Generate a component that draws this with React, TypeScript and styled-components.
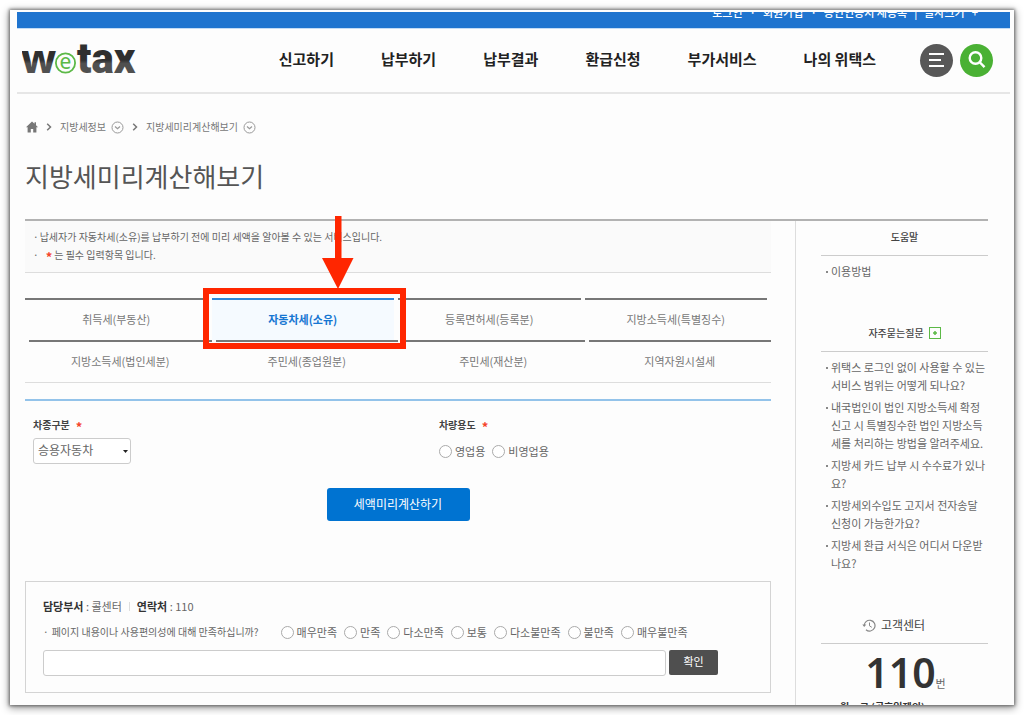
import React from "react";
import styled, { createGlobalStyle } from "styled-components";

const GlobalStyle = createGlobalStyle`
  *, *::before, *::after { box-sizing: border-box; }
  body {
    margin: 0;
    background: #fff;
    color: #666;
    font-family: "Noto Sans CJK KR", "Noto Sans", sans-serif;
    font-size: 11px;
    line-height: 18px;
  }
  ul, ol, p, h1, h2, fieldset { margin: 0; padding: 0; border: 0; list-style: none; }
  a { color: inherit; text-decoration: none; }
  button, input, select { font-family: inherit; }
`;

const Page = styled.div`
  padding: 10px;
`;

const Frame = styled.div`
  height: calc(100vh - 20px);
  overflow: hidden;
  padding: 2px 4px 0 7px;
  background: #fdfdfd;
  box-shadow: 0 0 3px 1px rgba(0, 0, 0, 0.45), 0 2px 8px 1px rgba(0, 0, 0, 0.4);
`;

const UtilityBar = styled.div`
  display: flex;
  justify-content: flex-end;
  gap: 7px;
  height: 16px;
  padding-right: 32px;
  overflow: hidden;
  background: #1f74cf;
  color: #fff;
  font-size: 11px;
  font-weight: 500;
  line-height: 1px;
`;

const Header = styled.header`
  display: flex;
  align-items: center;
  height: 66px;
  padding: 0 17px 1px 5px;
  border-top: 1px solid #c3dcf5;
  border-bottom: 2px solid #e6e6e6;
`;

const LogoLink = styled.a`
  display: block;
  height: 36px;
`;

const MainNav = styled.nav`
  display: flex;
  gap: 47px;
  margin-left: auto;
  padding-bottom: 2px;
  color: #222;
  font-size: 15px;
  font-weight: 700;
`;

const HeaderActions = styled.div`
  display: flex;
  gap: 7px;
  margin-left: 44px;
`;

const RoundButton = styled.button<{ $color: string }>`
  display: flex;
  align-items: center;
  justify-content: center;
  width: 33px;
  height: 33px;
  padding: 0;
  border: 0;
  border-radius: 50%;
  background: ${(p) => p.$color};
`;

const Content = styled.div`
  padding: 23px 22px 0 8px;
`;

const Breadcrumb = styled.nav`
  display: flex;
  align-items: center;
  gap: 8px;
  height: 20px;
  padding-left: 1px;
  color: #777;
  font-size: 10px;
`;

const Crumb = styled.span`
  display: flex;
  align-items: center;
  gap: 5px;
`;

const PageTitle = styled.h1`
  margin: 19px 0 23px;
  color: #555;
  font-size: 26px;
  font-weight: 400;
  line-height: 40px;
`;

const Columns = styled.div`
  display: grid;
  grid-template-columns: minmax(0, 1fr) 193px;
  gap: 24px;
  border-top: 2px solid #b2b2b2;
`;

const Notice = styled.ul`
  padding: 7px 8px 8px;
  border-bottom: 1px solid #ddd;
  background: #fafafa;
  font-size: 10px;
`;

const NoticeItem = styled.li`
  display: flex;
  gap: 1px;
`;

const Required = styled.span`
  margin: 0 2px 0 6px;
  color: #f5442c;
  font-size: 13px;
  font-weight: 700;
  line-height: 10px;
  vertical-align: -3px;
`;

const Tabs = styled.nav`
  margin-top: 25px;
  border-bottom: 1px solid #ddd;
`;

const TabRow = styled.div<{ $shifted?: boolean }>`
  display: grid;
  grid-template-columns: repeat(4, 1fr);
  gap: 4px;
  padding: ${(p) => (p.$shifted ? "0 0 0 4px" : "0 4px 0 0")};
`;

const Tab = styled.a<{ $active?: boolean }>`
  position: relative;
  display: flex;
  align-items: center;
  justify-content: center;
  height: 42px;
  padding-bottom: 2px;
  border-top: 2px solid ${(p) => (p.$active ? "#2f88d8" : "#777")};
  background: ${(p) => (p.$active ? "#f5faff" : "transparent")};
  color: ${(p) => (p.$active ? "#1676d2" : "#777")};
  font-weight: ${(p) => (p.$active ? 700 : 400)};
`;

const Highlight = styled.span`
  position: absolute;
  z-index: 1;
  inset: -12px -12px -9px -9px;
  border: 6px solid #ff2600;
  pointer-events: none;
`;

const HighlightArrow = styled.svg`
  position: absolute;
  left: 113px;
  bottom: 54px;
`;

const TaxForm = styled.form`
  margin-top: 16px;
  padding-top: 15px;
  border-top: 2px solid #93c3ea;
`;

const FieldGrid = styled.div`
  display: grid;
  grid-template-columns: 11fr 9fr;
  padding-left: 8px;
`;

const FieldTitle = styled.div`
  height: 18px;
  margin-bottom: 4px;
  color: #444;
  font-size: 10px;
  font-weight: 700;
`;

const SelectBox = styled.div`
  position: relative;
  width: 98px;
`;

const Select = styled.select`
  display: block;
  width: 100%;
  height: 26px;
  padding: 0 4px 3px;
  appearance: none;
  border: 1px solid #ccc;
  border-radius: 3px;
  background: #fff;
  color: #666;
  font-size: 12px;
`;

const SelectArrow = styled.svg`
  position: absolute;
  right: 3px;
  top: 12px;
  pointer-events: none;
`;

const RadioGroup = styled.div`
  display: flex;
  align-items: center;
  gap: 7px;
  height: 26px;
`;

const RadioLabel = styled.label`
  display: flex;
  align-items: center;
  gap: 3px;
`;

const Radio = styled.input`
  width: 13px;
  height: 13px;
  margin: 0;
  appearance: none;
  border: 1px solid #aaa;
  border-radius: 50%;
  background: #fff;

  &:checked { background: #1676d2; }
`;

const RadioText = styled.span`
  padding-bottom: 1px;
`;

const SubmitButton = styled.button`
  display: block;
  width: 143px;
  height: 33px;
  margin: 24px auto 0;
  padding: 0 0 3px;
  border: 0;
  border-radius: 3px;
  background: #0073d1;
  color: #fff;
  font-size: 12px;
`;

const Feedback = styled.form`
  margin-top: 60px;
  padding: 15px 17px 16px;
  border: 1px solid #d4d4d4;
`;

const Contact = styled.p`
  display: flex;
  align-items: center;
  gap: 7px;

  b { color: #333; }
`;

const Divider = styled.span`
  width: 1px;
  height: 9px;
  background: #ddd;
`;

const Survey = styled.div`
  display: flex;
  align-items: center;
  gap: 22px;
  height: 26px;
  margin-top: 4px;
`;

const Question = styled.span`
  display: flex;
  gap: 3px;
  font-size: 10px;
`;

const Opinion = styled.div`
  display: flex;
  gap: 3px;
  margin-top: 5px;
  padding-right: 35px;
`;

const OpinionInput = styled.input`
  flex: 1;
  min-width: 0;
  height: 26px;
  border: 1px solid #ccc;
  border-radius: 3px;
  background: #fff;
`;

const ConfirmButton = styled.button`
  width: 49px;
  height: 25px;
  padding: 0 0 3px;
  border: 0;
  border-radius: 2px;
  background: #4f4f4f;
  color: #fff;
  font-size: 11px;
`;

const Sidebar = styled.aside`
  padding-left: 25px;
  border-left: 1px solid #ddd;
`;

const SideTitle = styled.h2<{ $large?: boolean }>`
  display: flex;
  align-items: center;
  justify-content: center;
  gap: 5px;
  height: 35px;
  padding: ${(p) => (p.$large ? "0 22px 2px 0" : "0 0 2px")};
  border-bottom: 1px solid #ccc;
  color: #444;
  font-size: ${(p) => (p.$large ? 12 : 10)}px;
  font-weight: ${(p) => (p.$large ? 400 : 500)};
`;

const SideList = styled.ul`
  display: grid;
  gap: 4px;
  padding: 6px 0 0 10px;
`;

const SideItem = styled.li`
  position: relative;

  &::before {
    content: "";
    position: absolute;
    left: -5px;
    top: 9px;
    width: 2px;
    height: 2px;
    background: #888;
  }
`;

const SideSection = styled.section<{ $height?: number }>`
  min-height: ${(p) => p.$height ?? 0}px;
`;

const PhoneNumber = styled.p`
  display: flex;
  align-items: baseline;
  justify-content: center;
  height: 56px;
  padding-left: 2px;
  line-height: 56px;

  strong {
    color: #333;
    font-family: "Noto Sans", sans-serif;
    font-size: 41px;
    font-weight: 600;
  }
`;

const Hours = styled.p`
  padding-left: 19px;
  color: #333;
  font-size: 10px;
  font-weight: 700;
  line-height: 14px;
`;

const Logo = () => (
  <svg width="116" height="36" viewBox="0 0 116 36" role="img" aria-label="wetax">
    <defs>
      <linearGradient id="ink" gradientUnits="userSpaceOnUse" x1="0" y1="0" x2="0" y2="36">
        <stop offset="0.5" stopColor="#2f2f2f" />
        <stop offset="0.6" stopColor="#505050" />
      </linearGradient>
    </defs>
    <g fill="url(#ink)">
      <text x="-1" y="31" fontFamily="'Noto Sans', sans-serif" fontWeight="800" fontSize="40">w</text>
      <text x="55" y="31" fontFamily="Roboto, sans-serif" fontWeight="900" fontSize="42">tax</text>
    </g>
    <circle cx="43.5" cy="21" r="9.6" fill="#fdfdfd" stroke="#5cb947" strokeWidth="1.8" />
    <text x="43.5" y="26.5" textAnchor="middle" fontFamily="'Noto Sans', sans-serif" fontSize="21" fill="#5cb947">e</text>
  </svg>
);

const MenuIcon = () => (
  <svg width="16" height="16" viewBox="0 0 16 16" stroke="#fff" strokeWidth="2">
    <path d="M0 2h15M0 8h12M0 14h15" />
  </svg>
);

const SearchIcon = () => (
  <svg width="18" height="18" viewBox="0 0 18 18" fill="none" stroke="#fff" strokeWidth="2.4">
    <circle cx="7.5" cy="7" r="5.8" />
    <path d="M11.5 11l5 5.2" />
  </svg>
);

const HomeIcon = () => (
  <svg width="12" height="12" viewBox="0 0 12 12" fill="#777">
    <path d="M6 0.5L0 6.2h1.6V11.5h3.2V8h2.4v3.5h3.2V6.2H12L10 4.3V1.3H8.5v1.5z" />
  </svg>
);

const ChevronIcon = () => (
  <svg width="6" height="8" viewBox="0 0 6 8" fill="none" stroke="#777" strokeWidth="1.5">
    <path d="M1.2 0.8L4.5 4 1.2 7.2" />
  </svg>
);

const DownCircleIcon = () => (
  <svg width="13" height="13" viewBox="0 0 13 13" fill="none" stroke="#999">
    <circle cx="6.5" cy="6.5" r="5.5" />
    <path d="M4 5.5l2.5 2.3L9 5.5" strokeWidth="1.2" />
  </svg>
);

const PlusBoxIcon = () => (
  <svg width="12" height="12" viewBox="0 0 12 12" fill="none" stroke="#5cb947">
    <rect x="0.5" y="0.5" width="11" height="11" />
    <path d="M6 4v4M4 6h4" strokeWidth="1.5" />
  </svg>
);

const HistoryIcon = () => (
  <svg width="14" height="13" viewBox="0 0 14 13" fill="none" stroke="#888">
    <path d="M2.2 7A5.4 5.4 0 1 1 4 10.7" strokeWidth="1.2" />
    <path d="M0.3 5.5L2.2 8 4.3 5.5z" fill="#888" stroke="none" />
    <path d="M7.5 3.5v3.3l2.3 1.5" />
  </svg>
);

const menu = ["신고하기", "납부하기", "납부결과", "환급신청", "부가서비스", "나의 위택스"];
const firstTabs = ["취득세(부동산)", "자동차세(소유)", "등록면허세(등록분)", "지방소득세(특별징수)"];
const secondTabs = ["지방소득세(법인세분)", "주민세(종업원분)", "주민세(재산분)", "지역자원시설세"];
const ratings = ["매우만족", "만족", "다소만족", "보통", "다소불만족", "불만족", "매우불만족"];
const questions = [
  "위택스 로그인 없이 사용할 수 있는 서비스 범위는 어떻게 되나요?",
  "내국법인이 법인 지방소득세 확정신고 시 특별징수한 법인 지방소득세를 처리하는 방법을 알려주세요.",
  "지방세 카드 납부 시 수수료가 있나요?",
  "지방세외수입도 고지서 전자송달 신청이 가능한가요?",
  "지방세 환급 서식은 어디서 다운받나요?",
];

const RadioOption = ({ name, label }: { name: string; label: string }) => (
  <RadioLabel>
    <Radio type="radio" name={name} />
    <RadioText>{label}</RadioText>
  </RadioLabel>
);

export default function App() {
  return (
    <>
      <GlobalStyle />
      <Page>
        <Frame>
          <UtilityBar>
            <a href="#login">로그인</a>
            <span>·</span>
            <a href="#join">회원가입</a>
            <span>·</span>
            <a href="#cert">공인인증서 재등록</a>
            <span>|</span>
            <span>글자크기</span>
            <span>+</span>
          </UtilityBar>
          <Header>
            <LogoLink href="#home"><Logo /></LogoLink>
            <MainNav>
              {menu.map((m) => <a key={m} href="#menu">{m}</a>)}
            </MainNav>
            <HeaderActions>
              <RoundButton $color="#585858" aria-label="전체메뉴"><MenuIcon /></RoundButton>
              <RoundButton $color="#4ab134" aria-label="검색"><SearchIcon /></RoundButton>
            </HeaderActions>
          </Header>
          <Content>
            <Breadcrumb>
              <HomeIcon />
              <ChevronIcon />
              <Crumb><a href="#info">지방세정보</a><DownCircleIcon /></Crumb>
              <ChevronIcon />
              <Crumb><a href="#calc">지방세미리계산해보기</a><DownCircleIcon /></Crumb>
            </Breadcrumb>
            <PageTitle>지방세미리계산해보기</PageTitle>
            <Columns>
              <main>
                <Notice>
                  <NoticeItem>
                    <span>·</span>
                    <span>납세자가 자동차세(소유)를 납부하기 전에 미리 세액을 알아볼 수 있는 서비스입니다.</span>
                  </NoticeItem>
                  <NoticeItem>
                    <span>·</span>
                    <span><Required>*</Required>는 필수 입력항목 입니다.</span>
                  </NoticeItem>
                </Notice>
                <Tabs>
                  <TabRow>
                    {firstTabs.map((t, i) => (
                      <Tab key={t} href="#tab" $active={i === 1}>
                        {t}
                        {i === 1 && (
                          <Highlight>
                            <HighlightArrow width="32" height="73" viewBox="0 0 32 73" fill="#ff2600">
                              <path d="M13 0h6.5v42H31.5L16 73 0 42h13z" />
                            </HighlightArrow>
                          </Highlight>
                        )}
                      </Tab>
                    ))}
                  </TabRow>
                  <TabRow $shifted>
                    {secondTabs.map((t) => <Tab key={t} href="#tab">{t}</Tab>)}
                  </TabRow>
                </Tabs>
                <TaxForm onSubmit={(e) => e.preventDefault()}>
                  <FieldGrid>
                    <div>
                      <FieldTitle><label htmlFor="kind">차종구분</label><Required>*</Required></FieldTitle>
                      <SelectBox>
                        <Select id="kind"><option>승용자동차</option></Select>
                        <SelectArrow width="5" height="3" viewBox="0 0 5 3"><path d="M0 0h5L2.5 3z" fill="#222" /></SelectArrow>
                      </SelectBox>
                    </div>
                    <div role="radiogroup" aria-labelledby="usage">
                      <FieldTitle><span id="usage">차량용도</span><Required>*</Required></FieldTitle>
                      <RadioGroup>
                        <RadioOption name="usage" label="영업용" />
                        <RadioOption name="usage" label="비영업용" />
                      </RadioGroup>
                    </div>
                  </FieldGrid>
                  <SubmitButton type="submit">세액미리계산하기</SubmitButton>
                </TaxForm>
                <Feedback onSubmit={(e) => e.preventDefault()}>
                  <Contact>
                    <span><b>담당부서</b> : 콜센터</span>
                    <Divider />
                    <span><b>연락처</b> : 110</span>
                  </Contact>
                  <Survey>
                    <Question><span>·</span><span>페이지 내용이나 사용편의성에 대해 만족하십니까?</span></Question>
                    <RadioGroup>
                      {ratings.map((r) => <RadioOption key={r} name="rating" label={r} />)}
                    </RadioGroup>
                  </Survey>
                  <Opinion>
                    <OpinionInput type="text" aria-label="의견" />
                    <ConfirmButton type="submit">확인</ConfirmButton>
                  </Opinion>
                </Feedback>
              </main>
              <Sidebar>
                <SideSection $height={96}>
                  <SideTitle>도움말</SideTitle>
                  <SideList><SideItem><a href="#howto">이용방법</a></SideItem></SideList>
                </SideSection>
                <SideSection $height={292}>
                  <SideTitle>자주묻는질문 <PlusBoxIcon /></SideTitle>
                  <SideList>
                    {questions.map((q) => <SideItem key={q}><a href="#faq">{q}</a></SideItem>)}
                  </SideList>
                </SideSection>
                <SideSection>
                  <SideTitle $large><HistoryIcon /> 고객센터</SideTitle>
                  <PhoneNumber><strong>110</strong>번</PhoneNumber>
                  <Hours>월 ~ 금 (공휴일제외)</Hours>
                </SideSection>
              </Sidebar>
            </Columns>
          </Content>
        </Frame>
      </Page>
    </>
  );
}
